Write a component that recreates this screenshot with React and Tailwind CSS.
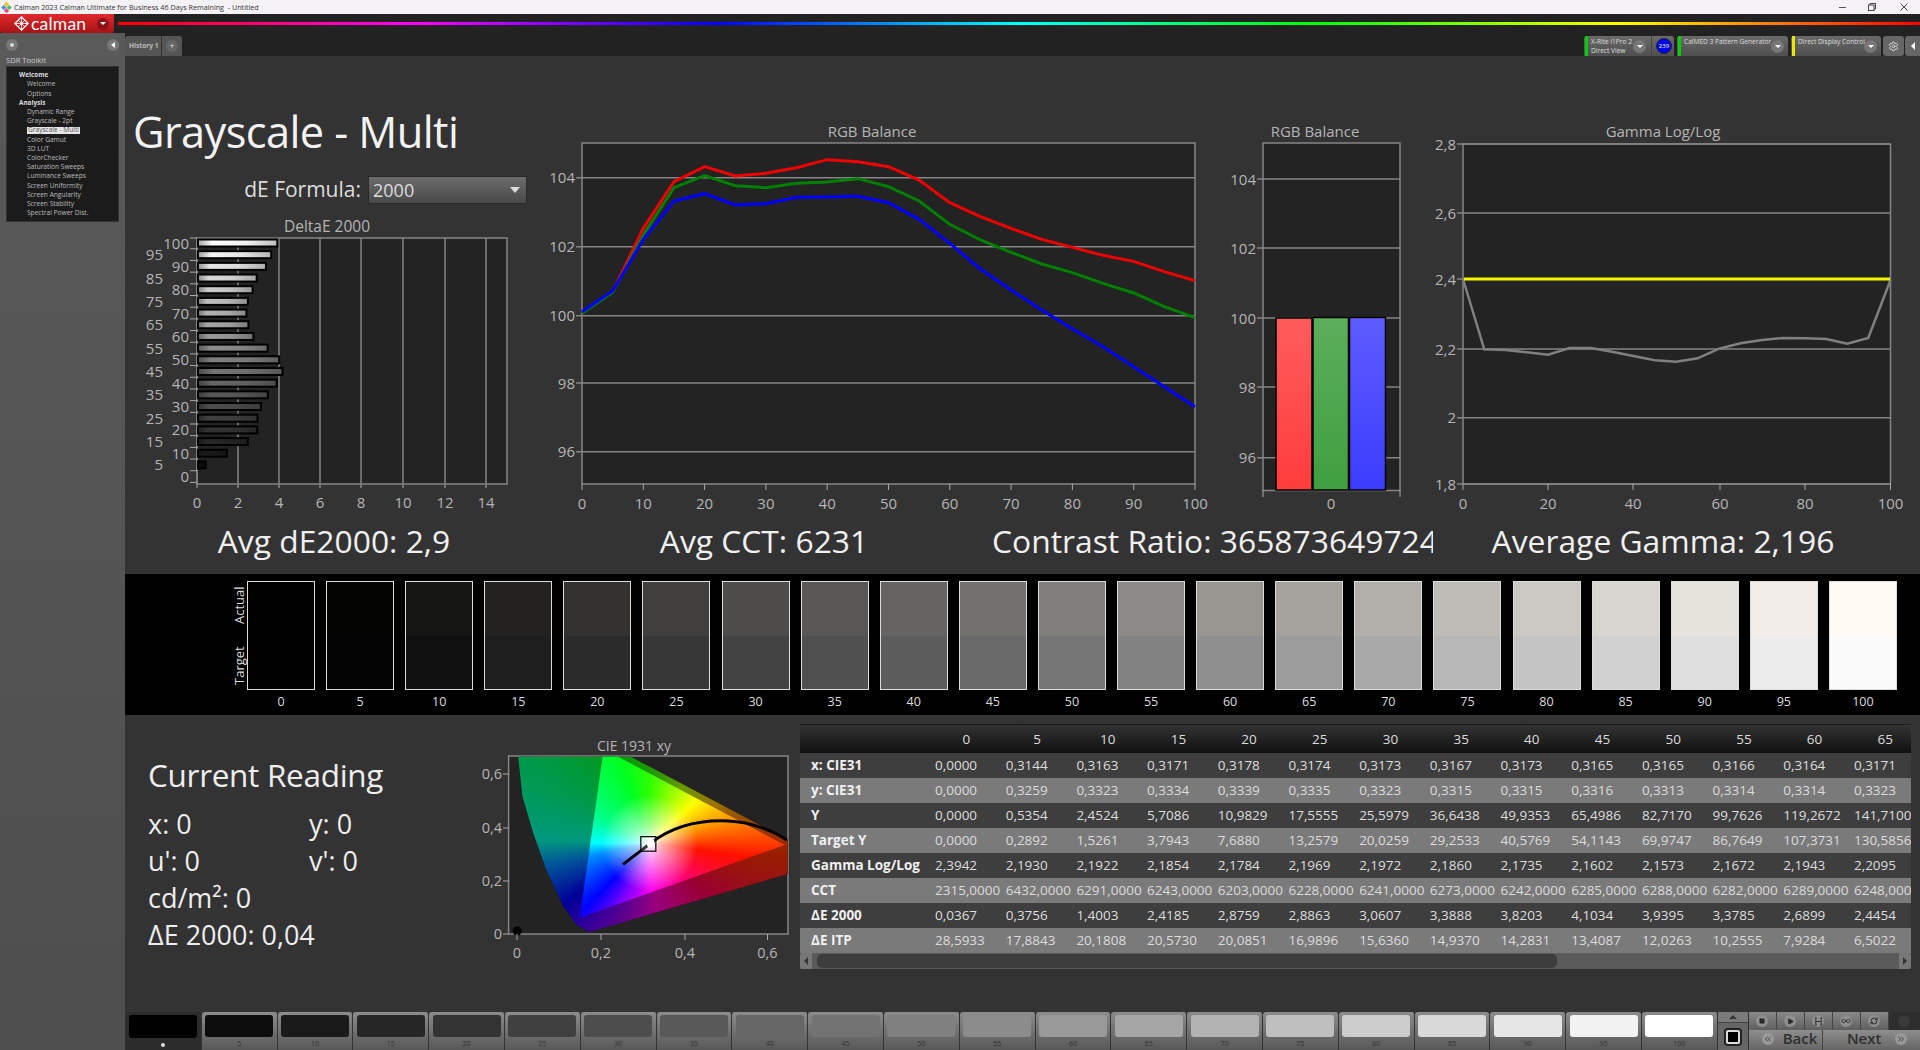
import { ChevronsLeft, ChevronsRight, Infinity as InfinityIcon, Play, RefreshCw, Settings, Square } from 'lucide-react'

const levels = Array.from({ length: 21 }, (_, i) => i * 5)

const toPoints = (ys) => ys.map((v, i) => `${582 + i * 30.65},${120 + v / 3}`).join(' ')

const redLine = [577, 515, 325, 185, 140, 168, 160, 143, 119, 125, 140, 180, 248, 290, 325, 358, 382, 406, 424, 455, 482]
const greenLine = [580, 517, 345, 203, 167, 197, 203, 190, 186, 176, 200, 243, 313, 360, 397, 432, 458, 490, 519, 560, 593]
const blueLine = [575, 513, 358, 243, 221, 255, 251, 232, 231, 229, 248, 298, 370, 447, 510, 570, 626, 680, 740, 800, 860]

const gammaLine = [
  [545, 480], [592, 688], [640, 690], [687, 697], [735, 704], [783, 684], [831, 684], [878, 695], [926, 708], [974, 721], [1022, 725],
  [1070, 715], [1118, 686], [1166, 670], [1214, 660], [1262, 654], [1310, 655], [1358, 657], [1405, 671], [1452, 654], [1502, 480],
]
  .map(([x, y]) => `${1220 + x / 2.24},${120 + y / 3}`)
  .join(' ')

const deltaBars = [0.0367, 0.3756, 1.4003, 2.4185, 2.8759, 2.8863, 3.0607, 3.3888, 3.8203, 4.1034, 3.9395, 3.3785, 2.6899, 2.4454, 2.35, 2.42, 2.65, 2.85, 3.3, 3.55, 3.85]

const tableRows = [
  ['x: CIE31', '0,0000', '0,3144', '0,3163', '0,3171', '0,3178', '0,3174', '0,3173', '0,3167', '0,3173', '0,3165', '0,3165', '0,3166', '0,3164', '0,3171'],
  ['y: CIE31', '0,0000', '0,3259', '0,3323', '0,3334', '0,3339', '0,3335', '0,3323', '0,3315', '0,3315', '0,3316', '0,3313', '0,3314', '0,3314', '0,3323'],
  ['Y', '0,0000', '0,5354', '2,4524', '5,7086', '10,9829', '17,5555', '25,5979', '36,6438', '49,9353', '65,4986', '82,7170', '99,7626', '119,2672', '141,7100'],
  ['Target Y', '0,0000', '0,2892', '1,5261', '3,7943', '7,6880', '13,2579', '20,0259', '29,2533', '40,5769', '54,1143', '69,9747', '86,7649', '107,3731', '130,5856'],
  ['Gamma Log/Log', '2,3942', '2,1930', '2,1922', '2,1854', '2,1784', '2,1969', '2,1972', '2,1860', '2,1735', '2,1602', '2,1573', '2,1672', '2,1943', '2,2095'],
  ['CCT', '2315,0000', '6432,0000', '6291,0000', '6243,0000', '6203,0000', '6228,0000', '6241,0000', '6273,0000', '6242,0000', '6285,0000', '6288,0000', '6282,0000', '6289,0000', '6248,0000'],
  ['ΔE 2000', '0,0367', '0,3756', '1,4003', '2,4185', '2,8759', '2,8863', '3,0607', '3,3888', '3,8203', '4,1034', '3,9395', '3,3785', '2,6899', '2,4454'],
  ['ΔE ITP', '28,5933', '17,8843', '20,1808', '20,5730', '20,0851', '16,9896', '15,6360', '14,9370', '14,2831', '13,4087', '12,0263', '10,2555', '7,9284', '6,5022'],
]

const treeItems = [
  { label: 'Welcome', head: true },
  { label: 'Welcome' },
  { label: 'Options' },
  { label: 'Analysis', head: true },
  { label: 'Dynamic Range' },
  { label: 'Grayscale - 2pt' },
  { label: 'Grayscale - Multi', active: true },
  { label: 'Color Gamut' },
  { label: '3D LUT' },
  { label: 'ColorChecker' },
  { label: 'Saturation Sweeps' },
  { label: 'Luminance Sweeps' },
  { label: 'Screen Uniformity' },
  { label: 'Screen Angularity' },
  { label: 'Screen Stability' },
  { label: 'Spectral Power Dist.' },
]

// the darkest patches read below the straight ramp
const darkActual = { 0: 0, 5: 4, 10: 21, 15: 35 }
const darkTarget = { 0: 0, 5: 3, 10: 17, 15: 30 }

const actualColor = (level) => {
  const p = level / 100
  const r = level in darkActual ? darkActual[level] : Math.round(255 * p)
  return `rgb(${r},${Math.round(r - 5 * p)},${Math.round(r - 11 * p)})`
}

const targetColor = (level) => {
  const v = level in darkTarget ? darkTarget[level] : Math.round(250 * Math.pow(level / 100, 1.09))
  return `rgb(${v},${v},${v})`
}

const gray = (level) => {
  const v = Math.round(255 * (level / 100))
  return `rgb(${v},${v},${v})`
}

function DropCircle() {
  return (
    <span className="flex h-[13px] w-[13px] shrink-0 items-center justify-center rounded-full bg-[#777]">
      <span className="h-0 w-0 border-x-[3px] border-t-[3px] border-x-transparent border-t-white" />
    </span>
  )
}

function TitleBar() {
  return (
    <div className="flex h-[14px] items-center bg-[#f5f2f6] text-[7.2px] text-[#333]">
      <svg viewBox="0 0 12 12" className="ml-[1px] h-[11px] w-[11px]">
        <rect x="4" y="0.5" width="4" height="4" transform="rotate(45 6 2.5)" fill="#f5c518" />
        <rect x="7" y="4" width="4" height="4" transform="rotate(45 9 6)" fill="#4cc35a" />
        <rect x="1" y="4" width="4" height="4" transform="rotate(45 3 6)" fill="#3f8fe0" />
        <rect x="4" y="7.5" width="4" height="4" transform="rotate(45 6 9.5)" fill="#ef4a7d" />
      </svg>
      <span className="ml-[2px] whitespace-pre">Calman 2023 Calman Ultimate for Business 46 Days Remaining  - Untitled</span>
      <div className="ml-auto flex items-center">
        <span className="mr-[22px] h-px w-[7px] bg-[#555]" />
        <svg viewBox="0 0 8 8" className="mr-[24px] h-[8px] w-[8px] fill-none stroke-[#444]">
          <rect x="0.5" y="2" width="5.5" height="5.5" />
          <path d="M2 2V.5h5.5V6H6" />
        </svg>
        <svg viewBox="0 0 8 8" className="mr-[12px] h-[8px] w-[8px] fill-none stroke-[#444]">
          <path d="M.5.5l7 7M7.5.5l-7 7" />
        </svg>
      </div>
    </div>
  )
}

function AppBar() {
  return (
    <div className="flex h-[19px] items-center bg-[#222]">
      <div className="flex h-full w-[114px] items-center rounded-b-[3px] bg-gradient-to-b from-[#e02a2c] to-[#a81216] pl-[14px]">
        <svg viewBox="0 0 16 16" className="h-[15px] w-[15px] fill-none stroke-white">
          <rect x="3" y="3" width="10" height="10" transform="rotate(45 8 8)" strokeWidth="1.4" />
          <path d="M4.5 4.5l7 7M11.5 4.5l-7 7M8 1v14M1 8h14" strokeWidth="0.9" />
        </svg>
        <span className="ml-[2px] font-['Lato',sans-serif] text-[17.5px] leading-none tracking-[0.2px] text-white">calman</span>
        <span className="ml-auto mr-[5px] flex h-[12px] w-[12px] items-center justify-center rounded-full bg-[#8d1116]">
          <span className="h-0 w-0 border-x-[3px] border-t-[3px] border-x-transparent border-t-white" />
        </span>
      </div>
      <div className="ml-[4px] h-[3px] flex-1 bg-[linear-gradient(to_right,#ff0000,#ff00ff_16.6%,#0000ff_33.3%,#00ffff_50%,#00ff00_66.6%,#ffff00_83.3%,#ff0000)]" />
    </div>
  )
}

function Sidebar() {
  return (
    <aside className="flex w-[125px] shrink-0 flex-col bg-gradient-to-b from-[#5a5a5a] to-[#4e4e4e] pt-[3px] text-[#ccc]">
      <div className="flex h-[17px] items-center justify-between px-[6px]">
        <span className="flex h-[12px] w-[12px] items-center justify-center rounded-full bg-[#777]">
          <span className="h-[4px] w-[4px] rounded-full bg-white/70" />
        </span>
        <span className="flex h-[12px] w-[12px] items-center justify-center rounded-full bg-[#777]">
          <span className="h-0 w-0 border-y-[3px] border-r-[4px] border-y-transparent border-r-white" />
        </span>
      </div>
      <div className="mt-[2px] h-[10px] pl-[6px] text-[7.6px] leading-[10px]">SDR Toolkit</div>
      <div className="mx-[6px] mt-[1px] h-[156px] w-[113px] border border-[#333] bg-[#1b1b1b] pt-[4px]">
        {treeItems.map((item) => (
          <div key={item.label + item.head} className={`flex h-[9.2px] items-center leading-none ${item.head ? 'pl-[12px] text-[6.4px] font-bold text-[#ddd]' : 'pl-[20px] text-[6.6px] text-[#bbb]'}`}>
            <span className={item.active ? 'bg-[#e6e6e6] px-[1px] text-[#555]' : ''}>{item.label}</span>
          </div>
        ))}
      </div>
    </aside>
  )
}

function DeviceBox({ stripe, lines, width, children }) {
  return (
    <div className={`flex h-[20px] items-center gap-[2px] rounded-t-[3px] bg-gradient-to-b from-[#6a6a6a] to-[#4f4f4f] pl-[1px] ${width}`}>
      <span className={`h-full w-[3px] ${stripe}`} />
      <div className="min-w-0 flex-1 pl-[1px] text-[6.6px] leading-[9.5px] text-[#ddd]">
        {lines.map((line) => (
          <div key={line} className="whitespace-nowrap">{line}</div>
        ))}
        {lines.length === 1 ? <div className="h-[9px]" /> : null}
      </div>
      {children}
    </div>
  )
}

function TabStrip() {
  return (
    <div className="flex h-[23px] items-end bg-[#222]">
      <div className="flex h-[20px] w-[57px] items-center rounded-t-[3px] bg-[#555] text-[6.6px] font-bold text-[#bbb]">
        <span className="w-[36px] whitespace-nowrap pl-[4px]">History 1</span>
        <span className="h-full w-px bg-[#333]" />
        <span className="ml-[4px] flex h-[12px] w-[12px] items-center justify-center rounded-full bg-[#666] text-[8px] leading-none">+</span>
      </div>
      <div className="ml-auto flex items-end">
        <DeviceBox stripe="bg-[#00d000]" lines={['X-Rite i1Pro 2', 'Direct View']} width="w-[90px]">
          <DropCircle />
          <span className="ml-[3px] h-full w-px bg-[#444]" />
          <span className="mx-[2px] flex h-[16px] w-[16px] shrink-0 items-center justify-center rounded-full border border-[#222] bg-[#0000f0] text-[6px] text-white">239</span>
        </DeviceBox>
        <div className="ml-[3px]">
          <DeviceBox stripe="bg-[#00d000]" lines={['CalMED 3 Pattern Generator']} width="w-[111px]">
            <span className="mr-[4px]"><DropCircle /></span>
          </DeviceBox>
        </div>
        <div className="ml-[3px]">
          <DeviceBox stripe="bg-[#e8e800]" lines={['Direct Display Control']} width="w-[90px]">
            <span className="mr-[4px]"><DropCircle /></span>
          </DeviceBox>
        </div>
        <div className="ml-[2px] flex h-[20px] w-[21px] items-center justify-center rounded-[3px] bg-[#666]">
          <Settings className="h-[11px] w-[11px] text-[#ddd]" strokeWidth={2} />
        </div>
        <div className="ml-px flex h-[20px] w-[15px] items-center justify-center rounded-l-[3px] bg-[#666]">
          <span className="h-0 w-0 border-y-[4px] border-r-[4px] border-y-transparent border-r-white" />
        </div>
      </div>
    </div>
  )
}

function DeltaChart() {
  const barY = (level) => 243 + ((100 - level) / 5) * 11.68
  const xs = [0, 2, 4, 6, 8, 10, 12, 14]
  const xPos = [197, 238, 279, 320, 361, 403, 445, 486]
  return (
    <svg viewBox="125 210 415 305" className="mt-[6px] h-[305px] w-[415px]">
      <defs>
        <linearGradient id="barShade" x1="0" x2="1" y1="0" y2="0">
          <stop offset="0" stopColor="#000" stopOpacity="0.35" />
          <stop offset="0.18" stopColor="#000" stopOpacity="0" />
          <stop offset="0.6" stopColor="#000" stopOpacity="0.05" />
          <stop offset="1" stopColor="#000" stopOpacity="0.25" />
        </linearGradient>
      </defs>
      <text x="327" y="232" textAnchor="middle" fontSize="15.5" fill="#b5b5b5">DeltaE 2000</text>
      <rect x="197" y="238" width="310" height="246" fill="#232323" stroke="#868686" strokeWidth="1.5" />
      {xPos.map((x, i) => (
        <g key={x}>
          <line x1={x} x2={x} y1="238" y2="488" stroke="#868686" strokeWidth="1.5" />
          <text x={x} y="508" textAnchor="middle" fontSize="15" fill="#b5b5b5">{xs[i]}</text>
        </g>
      ))}
      {levels.map((level, i) => (
        <g key={level}>
          <line x1="190" x2="197" y1={barY(level) + 5.8} y2={barY(level) + 5.8} stroke="#aaa" />
          <text x={level % 10 === 0 ? 189 : 163} y={barY(level) + 5.5} textAnchor="end" fontSize="15" fill="#b5b5b5">{level}</text>
          {level > 0 ? (
            <g>
              <rect x="198" y={barY(level) - 3.5} width={deltaBars[i] * 20.6} height="7" fill={gray(level)} stroke="#000" strokeWidth="2" />
              <rect x="198" y={barY(level) - 3.5} width={deltaBars[i] * 20.6} height="7" fill="url(#barShade)" />
            </g>
          ) : null}
        </g>
      ))}
      <line x1="190" x2="197" y1="238" y2="238" stroke="#aaa" />
    </svg>
  )
}

function LeftColumn() {
  return (
    <div className="flex w-[415px] shrink-0 flex-col">
      <h1 className="ml-[8px] mt-[48px] h-[56px] text-[43.4px] font-normal leading-[56px] tracking-[-0.6px] text-[#f2f2f2]">Grayscale - Multi</h1>
      <div className="mt-[16px] flex h-[28px] items-center">
        <span className="w-[236px] whitespace-nowrap text-right text-[21px] text-[#ddd]">dE Formula:</span>
        <div className="ml-[7px] flex h-[28px] w-[159px] items-center justify-between border border-[#2a2a2a] bg-gradient-to-b from-[#6c6c6c] to-[#494949] pl-[4px] pr-[6px] text-[18px] text-[#ddd]">
          2000
          <span className="h-0 w-0 border-x-[5px] border-t-[6px] border-x-transparent border-t-[#ddd]" />
        </div>
      </div>
      <DeltaChart />
    </div>
  )
}

function RgbLineChart() {
  const gridY = [177.7, 246.7, 315.7, 383, 451.7]
  const yLabels = [104, 102, 100, 98, 96]
  return (
    <svg viewBox="540 120 680 395" className="h-[395px] w-[680px] shrink-0">
      <text x="872" y="137" textAnchor="middle" fontSize="15" fill="#b5b5b5">RGB Balance</text>
      <rect x="582" y="143" width="613" height="341" fill="#232323" stroke="#868686" strokeWidth="1.5" />
      {gridY.map((y, i) => (
        <g key={y}>
          <line x1="576" x2="1195" y1={y} y2={y} stroke="#868686" strokeWidth="1.5" />
          <text x="575" y={y + 5.5} textAnchor="end" fontSize="15" fill="#b5b5b5">{yLabels[i]}</text>
        </g>
      ))}
      {levels.filter((l) => l % 10 === 0).map((l) => (
        <g key={l}>
          <line x1={582 + l * 6.13} x2={582 + l * 6.13} y1="484" y2="490" stroke="#aaa" />
          <text x={582 + l * 6.13} y="509" textAnchor="middle" fontSize="15" fill="#b5b5b5">{l}</text>
        </g>
      ))}
      <polyline points={toPoints(redLine)} fill="none" stroke="#f00000" strokeWidth="3" />
      <polyline points={toPoints(greenLine)} fill="none" stroke="#008000" strokeWidth="3" />
      <polyline points={toPoints(blueLine)} fill="none" stroke="#0000ff" strokeWidth="3" />
    </svg>
  )
}

function RgbBarChart() {
  const gridY = [179, 248, 318, 387, 457.7]
  const yLabels = [104, 102, 100, 98, 96]
  return (
    <svg viewBox="1220 120 210 395" className="h-[395px] w-[210px] shrink-0">
      <defs>
        <linearGradient id="barRed" x1="0" x2="0" y1="0" y2="1"><stop offset="0" stopColor="#ff5c5c" /><stop offset="1" stopColor="#ff3c3c" /></linearGradient>
        <linearGradient id="barGreen" x1="0" x2="0" y1="0" y2="1"><stop offset="0" stopColor="#5cae5c" /><stop offset="1" stopColor="#3f9f3f" /></linearGradient>
        <linearGradient id="barBlue" x1="0" x2="0" y1="0" y2="1"><stop offset="0" stopColor="#5c5cff" /><stop offset="1" stopColor="#3c3cff" /></linearGradient>
      </defs>
      <text x="1315" y="137" textAnchor="middle" fontSize="15" fill="#b5b5b5">RGB Balance</text>
      <rect x="1263" y="143" width="137" height="347.5" fill="#232323" stroke="#868686" strokeWidth="1.5" />
      {gridY.map((y, i) => (
        <g key={y}>
          <line x1="1257" x2="1400" y1={y} y2={y} stroke="#868686" strokeWidth="1.5" />
          <text x="1256" y={y + 5.5} textAnchor="end" fontSize="15" fill="#b5b5b5">{yLabels[i]}</text>
        </g>
      ))}
      <line x1="1263" x2="1263" y1="490" y2="497" stroke="#aaa" />
      <line x1="1400" x2="1400" y1="490" y2="497" stroke="#aaa" />
      <text x="1331" y="509" textAnchor="middle" fontSize="15" fill="#b5b5b5">0</text>
      <rect x="1276" y="318" width="36" height="172" fill="url(#barRed)" stroke="#000" strokeWidth="1.5" />
      <rect x="1313" y="317.5" width="35.5" height="172.5" fill="url(#barGreen)" stroke="#000" strokeWidth="1.5" />
      <rect x="1349.5" y="317.5" width="36" height="172.5" fill="url(#barBlue)" stroke="#000" strokeWidth="1.5" />
    </svg>
  )
}

function GammaChart() {
  const gridY = [144, 213, 279, 349, 417.7, 484]
  const yLabels = ['2,8', '2,6', '2,4', '2,2', '2', '1,8']
  const xs = [0, 20, 40, 60, 80, 100]
  const xPos = [1463, 1548, 1633, 1720, 1805, 1890.5]
  return (
    <svg viewBox="1430 120 490 395" className="h-[395px] w-[490px] shrink-0">
      <text x="1663" y="137" textAnchor="middle" fontSize="15" fill="#b5b5b5">Gamma Log/Log</text>
      <rect x="1463" y="144" width="427.5" height="340" fill="#232323" stroke="#868686" strokeWidth="1.5" />
      {gridY.map((y, i) => (
        <g key={y}>
          <line x1="1457" x2="1890" y1={y} y2={y} stroke="#868686" strokeWidth="1.5" />
          <text x="1456" y={y + 5.5} textAnchor="end" fontSize="15" fill="#b5b5b5">{yLabels[i]}</text>
        </g>
      ))}
      {xPos.map((x, i) => (
        <g key={x}>
          <line x1={x} x2={x} y1="484" y2="490" stroke="#aaa" />
          <text x={x} y="509" textAnchor="middle" fontSize="15" fill="#b5b5b5">{xs[i]}</text>
        </g>
      ))}
      <polyline points={gammaLine} fill="none" stroke="#808080" strokeWidth="2.5" />
      <line x1="1464" x2="1890" y1="279" y2="279" stroke="#f5f500" strokeWidth="3" />
    </svg>
  )
}

function StatsRow() {
  return (
    <div className="flex h-[59px] items-center pb-[7px] text-center text-[31.8px] leading-none text-[#f0f0f0]">
      <div className="w-[418px] shrink-0 whitespace-nowrap">Avg dE2000: 2,9</div>
      <div className="w-[442px] shrink-0 whitespace-nowrap">Avg CCT: 6231</div>
      <div className="w-[448px] shrink-0 overflow-hidden whitespace-nowrap pl-[7px] text-left">Contrast Ratio: 365873649724</div>
      <div className="w-[460px] shrink-0 whitespace-nowrap">Average Gamma: 2,196</div>
    </div>
  )
}

function SwatchBand() {
  return (
    <div className="flex h-[141px] shrink-0 bg-black pl-[110px] pt-[7px]">
      <div className="relative w-[12px] shrink-0 text-[13px] text-[#ddd]">
        <span className="absolute left-[-6px] top-[4px] h-[40px] w-[20px] rotate-180 whitespace-nowrap text-center leading-[20px] [writing-mode:vertical-rl]">Actual</span>
        <span className="absolute left-[-6px] top-[65px] h-[40px] w-[20px] rotate-180 whitespace-nowrap text-center leading-[20px] [writing-mode:vertical-rl]">Target</span>
      </div>
      {levels.map((level) => (
        <div key={level} className="w-[79.1px] shrink-0 pr-[11px]">
          <div className="flex h-[109px] w-[68px] flex-col overflow-hidden border-[1.5px] border-[#dcdcdc]">
            <div className="flex-1" style={{ backgroundColor: actualColor(level) }} />
            <div className="flex-1" style={{ backgroundColor: targetColor(level) }} />
          </div>
          <div className="mt-[3px] w-[68px] text-center text-[12.5px] leading-[18px] text-[#ddd]">{level}</div>
        </div>
      ))}
    </div>
  )
}

function CurrentReading() {
  return (
    <div className="w-[350px] shrink-0 pl-[23px] pt-[40px] text-[#eee]">
      <div className="h-[40px] whitespace-nowrap text-[31.5px] leading-[40px] tracking-[-0.3px]">Current Reading</div>
      <div className="mt-[10px] grid grid-cols-[161px_1fr] text-[27px] leading-[37px]">
        <div>x: 0</div>
        <div>y: 0</div>
        <div>u': 0</div>
        <div>v': 0</div>
        <div className="col-span-2">cd/m²: 0</div>
        <div className="col-span-2">ΔE 2000: 0,04</div>
      </div>
    </div>
  )
}

function CieChart() {
  // zoomed-crop coords to page coords
  const px = (x) => 130 + x / 2.306
  const py = (y) => 730 + y / 3
  const pts = (list) => list.map(([x, y]) => `${px(x)},${py(y)}`).join(' ')
  const horseshoe = pts([[895, 80], [905, 200], [930, 310], [960, 420], [1000, 530], [1030, 585], [1060, 606], [1517, 432], [1517, 330], [1155, 80]])
  const triangle = pts([[1037, 563], [1090, 80], [1125, 80], [1510, 345]])
  const pt = (x, y) => `${px(x)} ${py(y)}`
  const locus = `M${pt(1137, 403)} L${pt(1200, 340)} C${pt(1260, 280)} ${pt(1330, 270)} ${pt(1380, 273)} C${pt(1430, 276)} ${pt(1480, 300)} ${pt(1515, 330)}`
  return (
    <svg viewBox="475 735 320 235" className="mt-[20px] h-[235px] w-[320px] shrink-0">
      <defs>
        <clipPath id="horseshoe"><polygon points={horseshoe} /></clipPath>
        <clipPath id="triangle"><polygon points={triangle} /></clipPath>
      </defs>
      <text x="634" y="751" textAnchor="middle" fontSize="14" fill="#b5b5b5">CIE 1931 xy</text>
      <rect x="508.6" y="756" width="279.4" height="178" fill="#232323" stroke="#868686" strokeWidth="1.5" />
      <foreignObject x="508.6" y="756" width="279.4" height="178" clipPath="url(#horseshoe)">
        <div className="h-[178px] w-[279.4px] bg-black">
          <div className="h-full w-full opacity-60 bg-[conic-gradient(from_0deg_at_141px_87px,#30ff00_0deg,#b0ff00_30deg,#ffc000_60deg,#ff3000_95deg,#ff0050_130deg,#ff00d0_175deg,#6000ff_215deg,#0000ff_235deg,#0090ff_258deg,#00ffd0_272deg,#00ff90_295deg,#00ff20_340deg,#30ff00_360deg)]" />
        </div>
      </foreignObject>
      <foreignObject x="508.6" y="756" width="279.4" height="178" clipPath="url(#triangle)">
        <div className="relative h-[178px] w-[279.4px] bg-[conic-gradient(from_0deg_at_141px_87px,#30ff00_0deg,#b0ff00_30deg,#ffff00_48deg,#ff9000_75deg,#ff1000_98deg,#ff0080_140deg,#ff00f0_178deg,#8000ff_205deg,#0000ff_225deg,#0090ff_258deg,#00ffff_270deg,#00ff90_295deg,#00ff20_340deg,#30ff00_360deg)]">
          <div className="absolute inset-0 bg-[radial-gradient(circle_at_141px_87px,#ffffff_0,#ffffffaa_12px,#ffffff00_48px)]" />
        </div>
      </foreignObject>
      <path d={locus} fill="none" stroke="#000" strokeWidth="3" />
      <rect x={px(1178)} y={py(320)} width="15" height="14.5" fill="#ffffff33" stroke="#000" strokeWidth="1.2" />
      <ellipse cx={px(1200)} cy={py(338)} rx="4" ry="5" fill="#fff" />
      <circle cx={px(893)} cy={py(603)} r="4.5" fill="#000" />
      {[[517, '0'], [601, '0,2'], [685, '0,4'], [767.5, '0,6']].map(([x, label]) => (
        <g key={label}>
          <line x1={x} x2={x} y1="934" y2="940" stroke="#aaa" />
          <text x={x} y="958" textAnchor="middle" fontSize="14.5" fill="#b5b5b5">{label}</text>
        </g>
      ))}
      {[[934, '0'], [881, '0,2'], [828, '0,4'], [774, '0,6']].map(([y, label]) => (
        <g key={label}>
          <line x1="503" x2="508.6" y1={y} y2={y} stroke="#aaa" />
          <text x="502" y={y + 5} textAnchor="end" fontSize="14.5" fill="#b5b5b5">{label}</text>
        </g>
      ))}
    </svg>
  )
}

function DataTable() {
  const headers = levels.slice(0, 14)
  return (
    <div className="ml-[5px] mt-[9px] h-[245px] w-[1111px] shrink-0 overflow-hidden border-t border-[#1c1c1c] text-[13.5px] leading-[25px]">
      <div className="flex h-[28px] items-center bg-gradient-to-b from-[#333] to-[#111] text-[#ddd]">
        <div className="w-[135px] shrink-0" />
        {headers.map((h) => (
          <div key={h} className="w-[70.7px] shrink-0 pr-[8px] text-center">{h}</div>
        ))}
      </div>
      {tableRows.map((row, i) => (
        <div key={row[0]} className={`flex h-[25px] ${i % 2 === 0 ? 'bg-[#3e3e3e] text-[#dedede]' : 'bg-[#7a7a7a] text-[#dcdcdc]'}`}>
          <div className="w-[135px] shrink-0 whitespace-nowrap pl-[11px] font-bold text-[#f0f0f0]">{row[0]}</div>
          {row.slice(1).map((value, j) => (
            <div key={j} className="w-[70.7px] shrink-0 whitespace-nowrap">{value}</div>
          ))}
        </div>
      ))}
      <div className="flex h-[16px] items-center bg-[#5b5b5b]">
        <div className="flex h-full w-[12px] shrink-0 items-center justify-center rounded-l-[3px] bg-[#777]">
          <span className="h-0 w-0 border-y-[4px] border-r-[4px] border-y-transparent border-r-[#333]" />
        </div>
        <div className="ml-[5px] h-[14px] w-[740px] rounded-[5px] bg-[#3d3d3d]" />
        <div className="ml-auto flex h-full w-[12px] shrink-0 items-center justify-center rounded-r-[3px] bg-[#777]">
          <span className="h-0 w-0 border-y-[4px] border-l-[4px] border-y-transparent border-l-[#333]" />
        </div>
      </div>
    </div>
  )
}

function ToolButton({ children }) {
  return (
    <div className="flex h-[18px] w-[28px] items-center justify-center border-r border-[#444] bg-gradient-to-b from-[#8a8a8a] to-[#5e5e5e]">
      <span className="flex h-[12px] w-[12px] items-center justify-center rounded-full bg-[#8f8f8f] text-[#2b2b2b]">{children}</span>
    </div>
  )
}

function FilmStrip() {
  return (
    <div className="flex h-[40px] shrink-0 items-end pl-px">
      {levels.map((level) => (
        <div
          key={level}
          className={`flex h-[38px] w-[75.8px] shrink-0 flex-col items-center rounded-t-[3px] border-r border-[#333] pt-[3px] ${level === 0 ? 'bg-[#2c2c2c]' : 'bg-gradient-to-b from-[#8c8c8c] to-[#585858]'}`}
        >
          <div className="h-[23px] w-[68px] rounded-[3px]" style={{ backgroundColor: gray(level) }} />
          {level === 0 ? (
            <span className="mt-[5px] h-[4px] w-[4px] rounded-full bg-[#ddd]" />
          ) : (
            <span className="text-[7px] leading-[13px] text-[#333]">{level}</span>
          )}
        </div>
      ))}
      <div className="flex h-[38px] w-[30px] shrink-0 flex-col bg-[#666]">
        <div className="flex h-[11px] items-center justify-center border-b border-[#444] bg-[#7a7a7a]">
          <span className="h-0 w-0 border-x-[4px] border-b-[4px] border-x-transparent border-b-[#333]" />
        </div>
        <div className="flex flex-1 items-center justify-center">
          <span className="flex h-[18px] w-[18px] items-center justify-center rounded-[4px] border-2 border-[#222] bg-[#ddd]">
            <span className="h-[10px] w-[10px] bg-black" />
          </span>
        </div>
      </div>
      <div className="flex h-[38px] flex-1 flex-col pl-px">
        <div className="flex h-[18px]">
          <ToolButton><Square className="h-[6px] w-[6px] fill-current" /></ToolButton>
          <ToolButton><Play className="h-[7px] w-[7px] fill-current" /></ToolButton>
          <ToolButton>
            <svg viewBox="0 0 10 10" className="h-[9px] w-[9px] fill-none stroke-current"><path d="M2 1v8M8 1v8M2 5h6M1 1h2M1 9h2M7 1h2M7 9h2" /></svg>
          </ToolButton>
          <ToolButton><InfinityIcon className="h-[10px] w-[10px]" /></ToolButton>
          <ToolButton><RefreshCw className="h-[8px] w-[8px]" strokeWidth={3} /></ToolButton>
          <div className="flex flex-1 items-center justify-center bg-[#2e2e2e]">
            <span className="h-[12px] w-[12px] rounded-full bg-[#3a3a3a]" />
          </div>
        </div>
        <div className="flex flex-1 text-[15px] font-semibold text-[#2f2f2f]">
          <div className="flex flex-1 items-center border-r border-[#444] bg-gradient-to-b from-[#8e8e8e] to-[#666] pb-[3px] pl-[13px]">
            <span className="flex h-[12px] w-[12px] items-center justify-center rounded-full bg-[#999]"><ChevronsLeft className="h-[10px] w-[10px]" /></span>
            <span className="ml-[9px] leading-none">Back</span>
          </div>
          <div className="flex flex-1 items-center bg-gradient-to-b from-[#8e8e8e] to-[#666] pb-[3px] pl-[24px] pr-[13px]">
            <span className="leading-none">Next</span>
            <span className="ml-auto flex h-[12px] w-[12px] items-center justify-center rounded-full bg-[#999]"><ChevronsRight className="h-[10px] w-[10px]" /></span>
          </div>
        </div>
      </div>
    </div>
  )
}

export default function App() {
  return (
    <div className="flex h-[1050px] w-[1920px] flex-col overflow-hidden bg-[#222] font-['Open_Sans',sans-serif]">
      <TitleBar />
      <AppBar />
      <div className="flex min-h-0 flex-1">
        <Sidebar />
        <div className="flex min-w-0 flex-1 flex-col">
          <TabStrip />
          <main className="flex flex-1 flex-col bg-[#333]">
            <div className="flex h-[459px] shrink-0">
              <LeftColumn />
              <div className="flex pt-[64px]">
                <RgbLineChart />
                <RgbBarChart />
                <GammaChart />
              </div>
            </div>
            <StatsRow />
            <SwatchBand />
            <div className="flex h-[295px] shrink-0">
              <CurrentReading />
              <CieChart />
              <DataTable />
            </div>
            <FilmStrip />
          </main>
        </div>
      </div>
    </div>
  )
}
